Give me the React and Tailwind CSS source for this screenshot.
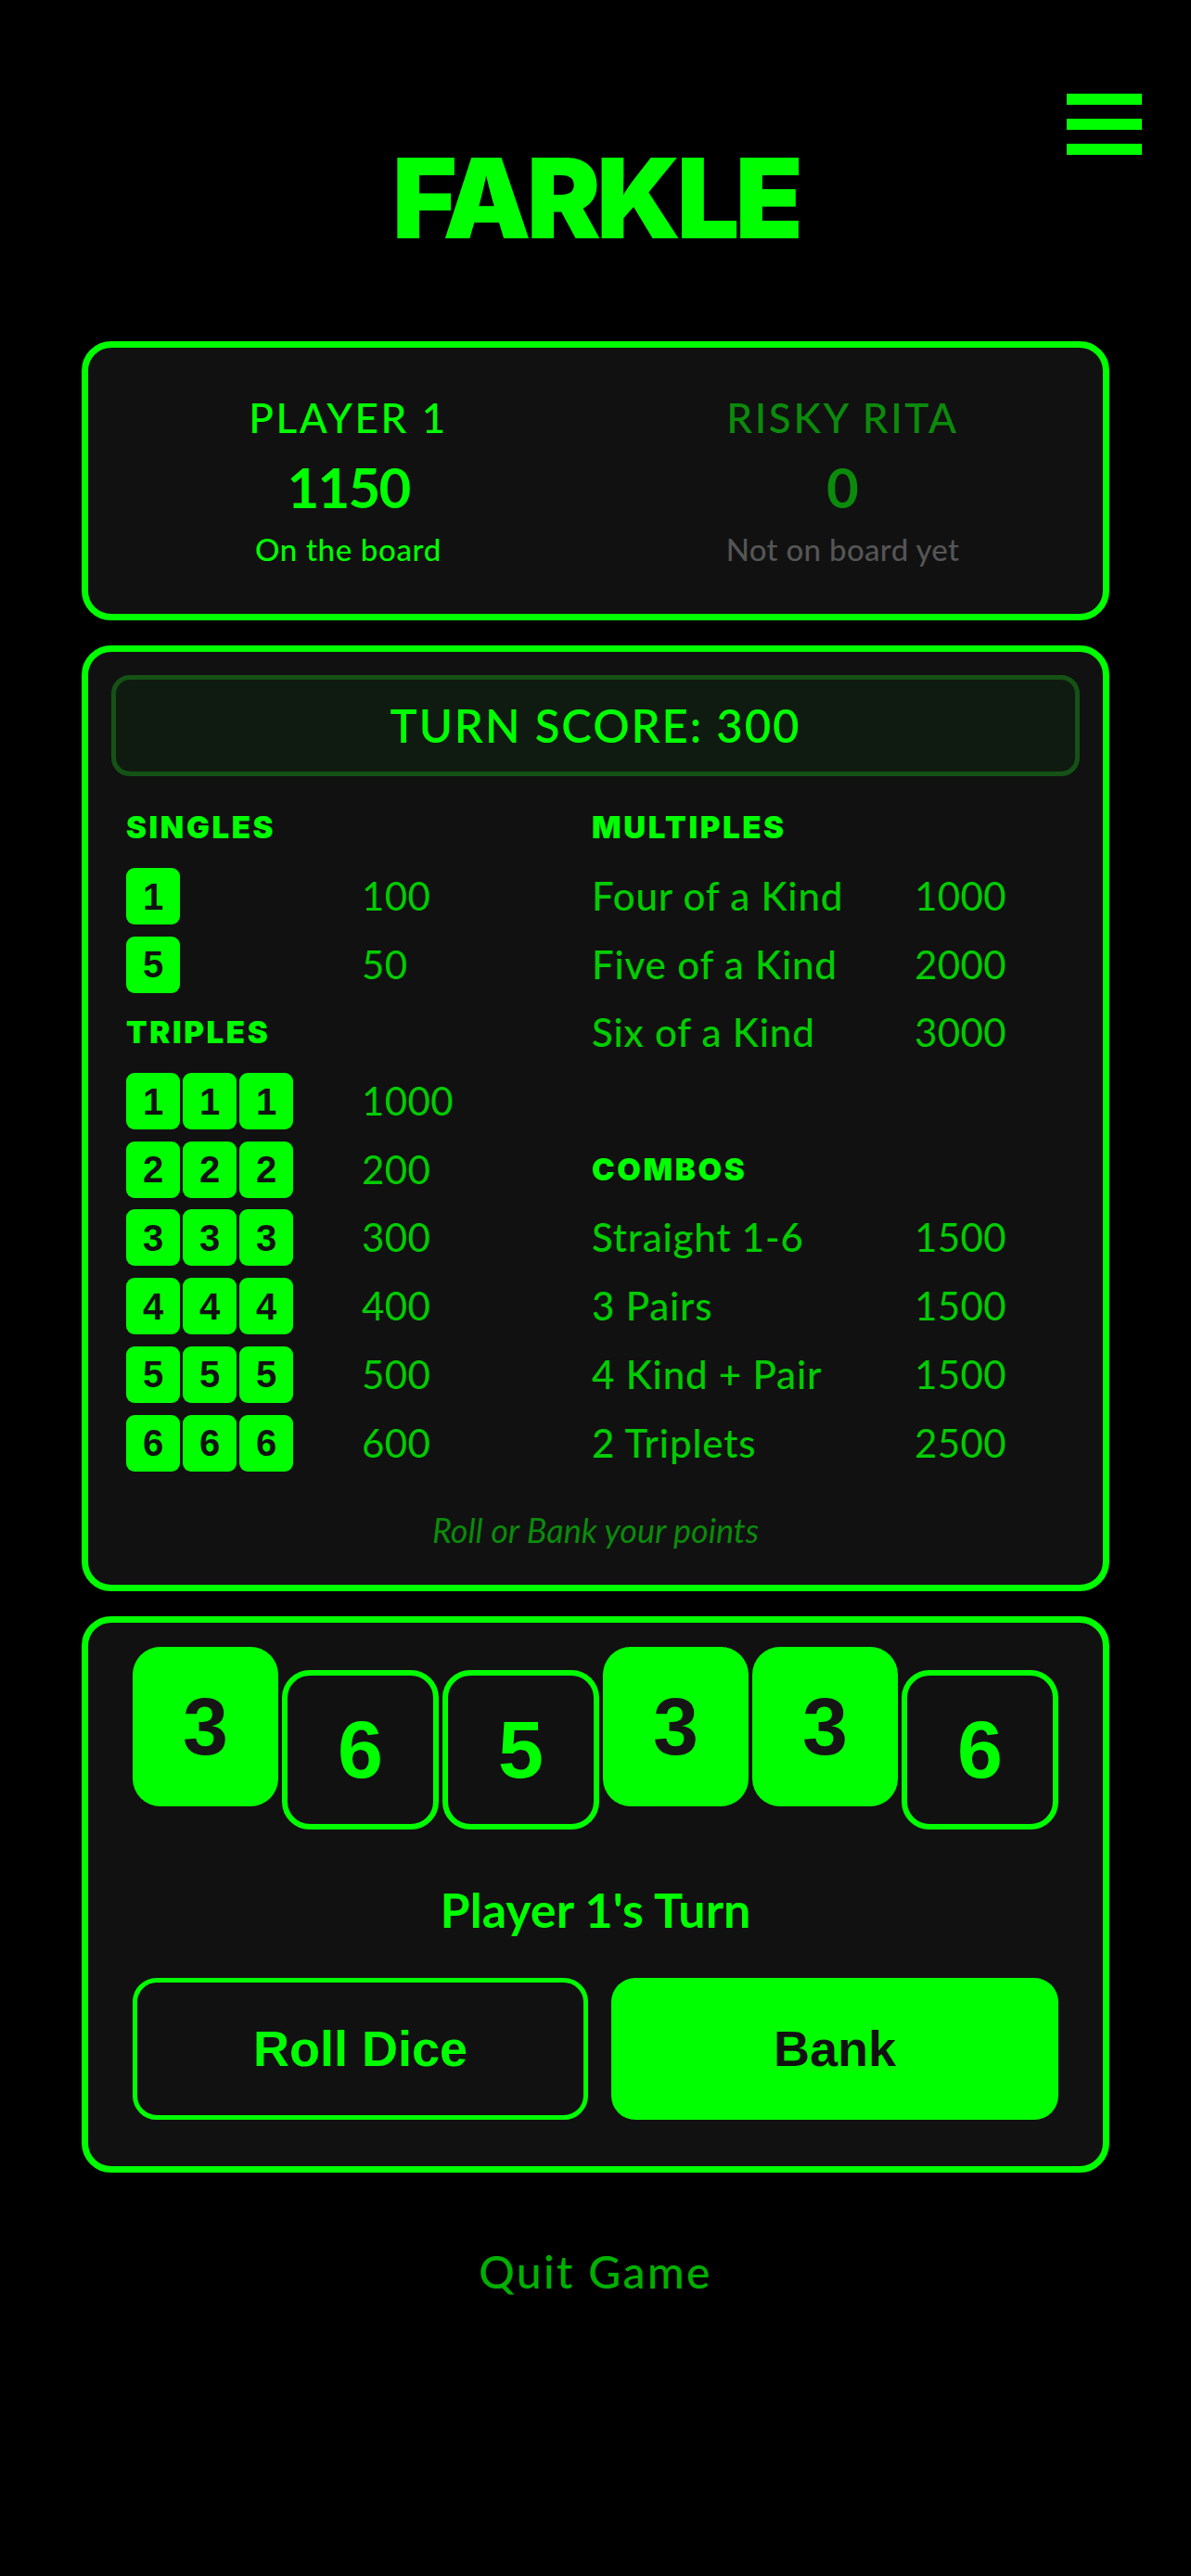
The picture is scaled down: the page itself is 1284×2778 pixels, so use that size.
import React from "react";

function MiniDie({ n }) {
  return (
    <div className="w-[58px] h-[61px] rounded-[9px] bg-[#00ff00] flex items-center justify-center font-['Liberation_Sans',Arial,sans-serif] font-bold text-[40px] leading-none text-[#111]">
      {n}
    </div>
  );
}

function Head({ children }) {
  return (
    <div className="h-[73.7px] flex items-center text-[33px] font-black tracking-[0.08em] text-[#00ff00] font-['Inter',sans-serif]">
      {children}
    </div>
  );
}

function Row({ left, value, valueX }) {
  return (
    <div className="h-[73.7px] flex items-center">
      <div className={valueX}>{left}</div>
      <div className="text-[42px] font-normal tracking-[0.01em] text-[#00cc00]">{value}</div>
    </div>
  );
}

function BigDie({ n, held }) {
  if (held) {
    return (
      <div className="flex-1 h-[172px] rounded-[30px] bg-[#00ff00] flex items-center justify-center font-['Liberation_Sans',Arial,sans-serif] font-bold text-[88px] leading-none text-[#151515]">
        {n}
      </div>
    );
  }
  return (
    <div className="flex-1 h-[172px] mt-[25px] rounded-[30px] border-[6px] border-[#00ff00] bg-[#111] flex items-center justify-center font-['Liberation_Sans',Arial,sans-serif] font-bold text-[88px] leading-none text-[#00ff00]">
      {n}
    </div>
  );
}

export default function App() {
  const singles = [["1", "100"], ["5", "50"]];
  const triples = [1, 2, 3, 4, 5, 6].map(n => [n, String(n === 1 ? 1000 : n * 100)]);
  const multiples = [["Four of a Kind", "1000"], ["Five of a Kind", "2000"], ["Six of a Kind", "3000"]];
  const combos = [["Straight 1-6", "1500"], ["3 Pairs", "1500"], ["4 Kind + Pair", "1500"], ["2 Triplets", "2500"]];
  const dice = [[3, true], [6, false], [5, false], [3, true], [3, true], [6, false]];

  return (
    <div className="relative min-h-[2778px] bg-black font-['Lato','Inter',sans-serif] text-[#00ff00]">
      {/* menu */}
      <button className="absolute top-[101px] right-[53px] w-[81px] flex flex-col gap-[15px]">
        <span className="block h-[12px] bg-[#00ff00]" />
        <span className="block h-[12px] bg-[#00ff00]" />
        <span className="block h-[12px] bg-[#00ff00]" />
      </button>

      <div className="pt-[154px] flex justify-center">
        <h1 className="font-['Inter',sans-serif] font-black text-[120px] leading-none h-[120px] tracking-[-0.04em] text-[#00ff00]">FARKLE</h1>
      </div>

      <div className="mx-[88px] mt-[94px] flex flex-col gap-[27px]">
        {/* players */}
        <div className="h-[301px] border-[7px] border-[#00ff00] rounded-[32px] bg-[#111] grid grid-cols-2 pt-[49px] px-[14px]">
          <div className="flex flex-col items-center">
            <div className="text-[44px] leading-[52px] font-medium tracking-[0.06em] text-[#00ff00]">PLAYER 1</div>
            <div className="mt-[19px] text-[60px] leading-[60px] font-bold tracking-[-0.03em] text-[#00ff00]">1150</div>
            <div className="mt-[17px] text-[33px] leading-[40px] font-medium tracking-[0.02em] text-[#00ff00]">On the board</div>
          </div>
          <div className="flex flex-col items-center">
            <div className="text-[44px] leading-[52px] font-medium tracking-[0.06em] text-[#0b8a0b]">RISKY RITA</div>
            <div className="mt-[19px] text-[60px] leading-[60px] font-bold text-[#0b8a0b]">0</div>
            <div className="mt-[17px] text-[33px] leading-[40px] font-medium tracking-[0.01em] text-[#555]">Not on board yet</div>
          </div>
        </div>

        {/* scoring */}
        <div className="h-[1020px] border-[7px] border-[#00ff00] rounded-[32px] bg-[#111] pt-[25px] px-[25px]">
          <div className="h-[109px] rounded-[20px] border-[5px] border-[#155215] bg-[#0f1b10] flex items-center justify-center text-[49px] font-semibold tracking-[0.04em] text-[#00ff00]">
            TURN SCORE: 300
          </div>
          <div className="mt-[19px] ml-[16px] grid grid-cols-[502px_1fr]">
            <div>
              <Head>SINGLES</Head>
              {singles.map(([d, v]) => (
                <Row key={d} left={<MiniDie n={d} />} value={v} valueX="w-[254px]" />
              ))}
              <Head>TRIPLES</Head>
              {triples.map(([d, v]) => (
                <Row
                  key={d}
                  left={<div className="flex gap-[3px]"><MiniDie n={d} /><MiniDie n={d} /><MiniDie n={d} /></div>}
                  value={v}
                  valueX="w-[254px]"
                />
              ))}
            </div>
            <div>
              <Head>MULTIPLES</Head>
              {multiples.map(([l, v]) => (
                <Row key={l} left={<span className="text-[42px] font-medium tracking-[0.02em] text-[#00cc00]">{l}</span>} value={v} valueX="w-[348px]" />
              ))}
              <div className="h-[73.7px]" />
              <Head>COMBOS</Head>
              {combos.map(([l, v]) => (
                <Row key={l} left={<span className="text-[42px] font-medium tracking-[0.02em] text-[#00cc00]">{l}</span>} value={v} valueX="w-[348px]" />
              ))}
            </div>
          </div>
          <div className="mt-[30px] text-center italic text-[36px] text-[#0b8a0b]">Roll or Bank your points</div>
        </div>

        {/* dice + actions */}
        <div className="h-[600px] border-[7px] border-[#00ff00] rounded-[32px] bg-[#111] pt-[26px] px-[48px]">
          <div className="flex items-start gap-[4px] h-[197px]">
            {dice.map(([n, held], i) => (
              <BigDie key={i} n={n} held={held} />
            ))}
          </div>
          <div className="mt-[56px] text-center text-[52px] leading-[60px] font-bold text-[#00ff00]">Player 1's Turn</div>
          <div className="mt-[44px] grid grid-cols-[491px_1fr] gap-[25px]">
            <button className="h-[153px] rounded-[26px] border-[5px] border-[#00ff00] bg-[#111] font-['Liberation_Sans',Arial,sans-serif] font-bold text-[54px] text-[#00ff00]">
              Roll Dice
            </button>
            <button className="h-[153px] rounded-[26px] bg-[#00ff00] font-['Liberation_Sans',Arial,sans-serif] font-bold text-[54px] text-[#111]">
              Bank
            </button>
          </div>
        </div>
      </div>

      <div className="mt-[77px] text-center font-['Lato',sans-serif] font-medium text-[48px] leading-[60px] tracking-[0.05em] text-[#00b000]">
        Quit Game
      </div>
    </div>
  );
}
